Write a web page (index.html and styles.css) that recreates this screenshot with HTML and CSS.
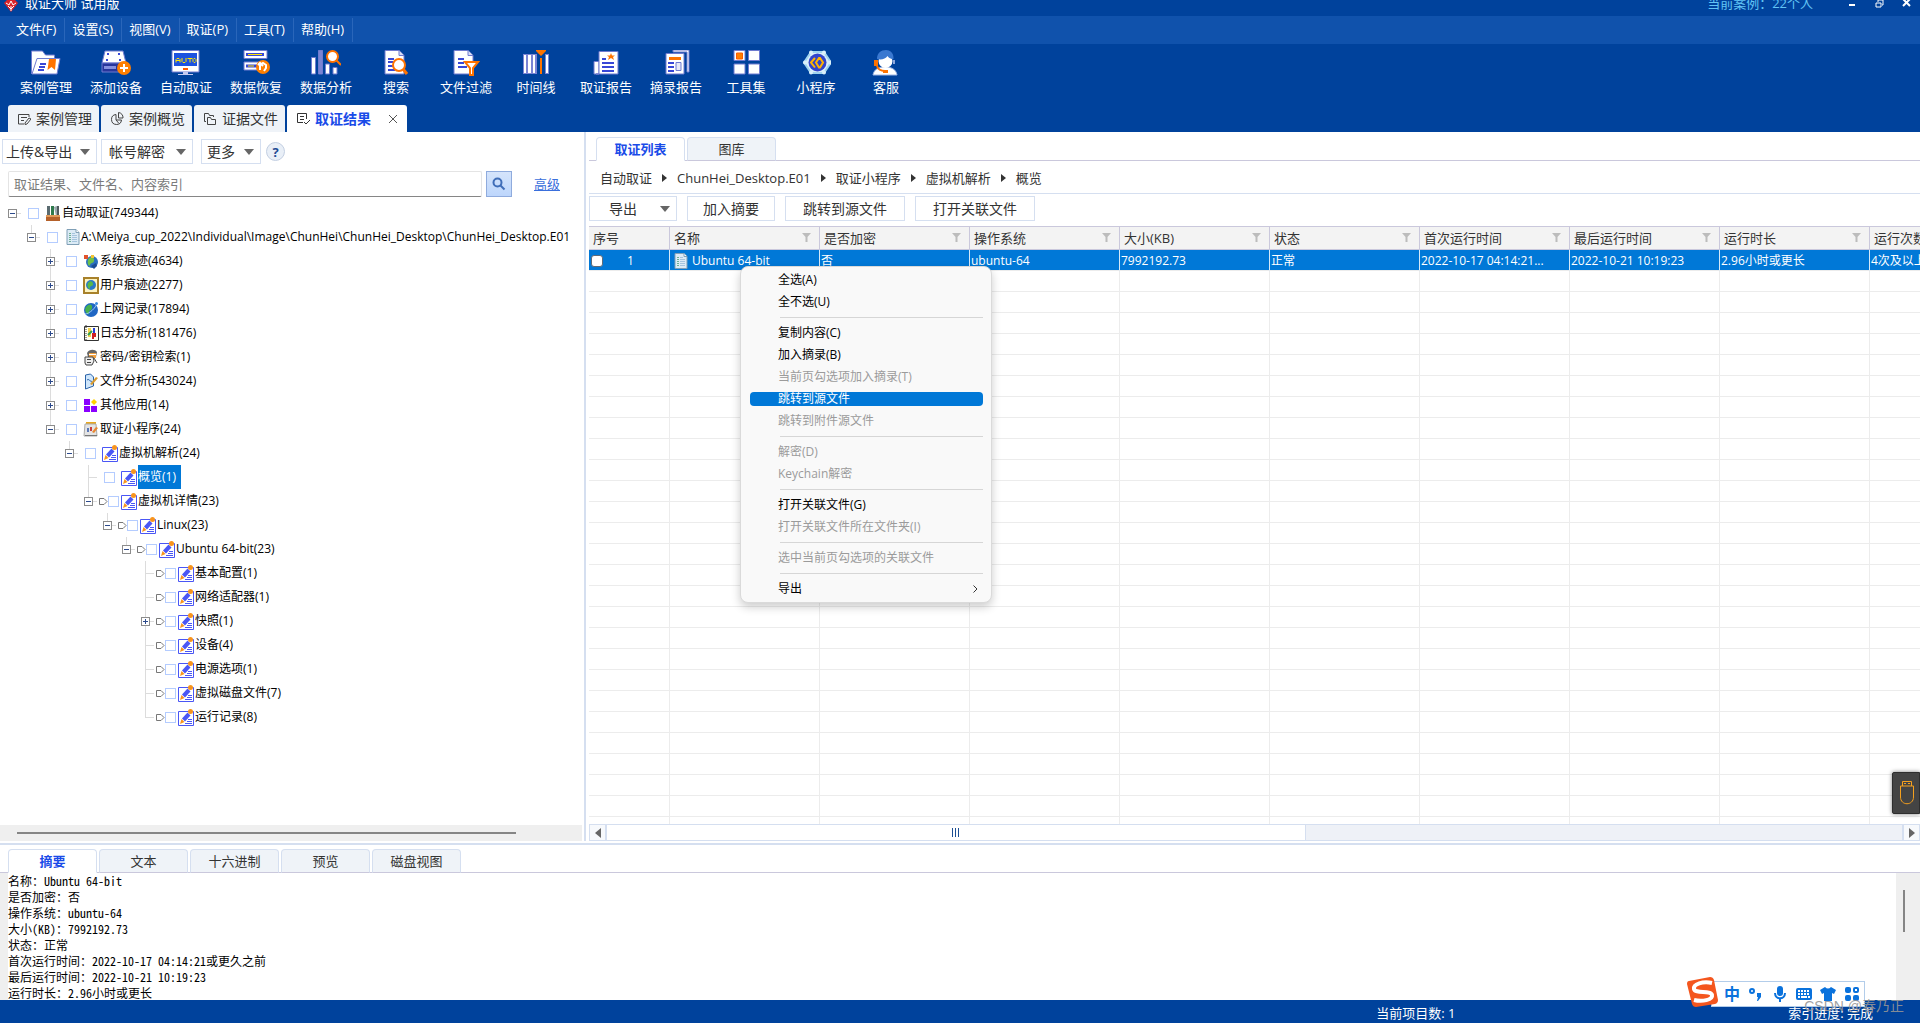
FILE: index.html
```html
<!DOCTYPE html>
<html lang="zh-CN">
<head>
    <meta charset="UTF-8">
    <meta name="viewport" content="width=device-width, initial-scale=1">
    <title>取证大师 试用版</title>
    <link rel="stylesheet" href="styles.css">
</head>
<body>

    <!-- shared icons -->
    <svg class="sprite" aria-hidden="true">
        <symbol id="i-edit" viewBox="0 0 17 17">
            <path d="M.5 2.500h15v14H.5z" fill="#fff" stroke="#4a56f5"/>
            <path d="M4 9.500 9.500 3.500l3 3-5.500 6z" fill="#4a56f5"/>
            <path d="m3.500 10 3 3L2 15z" fill="#f7941e"/>
            <circle cx="12.500" cy="2.500" r="2.500" fill="#f7941e"/>
            <path d="M10 10.500h4M9 12.500h5M7 14.500h7" stroke="#4a56f5"/>
        </symbol>
        <symbol id="i-doc" viewBox="0 0 14 16">
            <path d="M1 .5h9l3 3v12H1z" fill="#dcebf6" stroke="#7f9fb6"/>
            <path d="M10 .5v3h3" fill="#fff" stroke="#7f9fb6"/>
            <path d="M3 4.500h2M3 6.500h2M3 8.500h2M3 10.500h2M3 12.500h2" stroke="#6fb094"/>
            <path d="M6 4.500h3M6 6.500h5M6 8.500h5M6 10.500h5M6 12.500h5" stroke="#a5c4de"/>
        </symbol>
        <symbol id="i-tag" viewBox="0 0 9 9">
            <path d="M.5 1.500h4.500l3 3-3 3H.5z" fill="#fff" stroke="#777"/>
        </symbol>
        <symbol id="i-filter" viewBox="0 0 9 9">
            <path d="M0 0h9L5.500 4v5h-2V4z" fill="#bcbcbc"/>
        </symbol>
        <symbol id="i-down" viewBox="0 0 10 6">
            <path d="M0 0h10L5 6z" fill="#666"/>
        </symbol>
        <symbol id="i-crumb" viewBox="0 0 5 8">
            <path d="M0 0l5 4-5 4z" fill="#333"/>
        </symbol>
    </svg>

    <header class="top">
        <div class="titlebar">
            <svg class="app-logo" viewBox="0 0 14 12"><path d="M0 3l3-3h8l3 3-7 9z" fill="#d8232a"/><path d="M2 3l3 2 2-4 2 4 3-2M7 6v5M4 6l3 3 3-3" stroke="#fff" fill="none"/></svg>
            <span class="app-name">取证大师 试用版</span>
            <span class="case-name">当前案例：22个人</span>
            <button class="win-btn" aria-label="最小化"><svg viewBox="0 0 9 8"><path d="M1 5h6" stroke="#fff" stroke-width="2"/></svg></button>
            <button class="win-btn" aria-label="还原"><svg viewBox="0 0 9 8"><path d="M1 3h5v4H1zM3 2V0h5v5H7" stroke="#fff" fill="none"/></svg></button>
            <button class="win-btn" aria-label="关闭"><svg viewBox="0 0 9 8"><path d="M1-1l7 7M8-1L1 6" stroke="#fff" stroke-width="2"/></svg></button>
        </div>

        <nav class="menubar">
            <button>文件(F)</button>
            <button>设置(S)</button>
            <button>视图(V)</button>
            <button>取证(P)</button>
            <button>工具(T)</button>
            <button>帮助(H)</button>
        </nav>

        <div class="toolbar">
            <button>
                <svg viewBox="0 0 30 26"><path d="M.5 24V1h11l3 4h9v5" fill="#fff" stroke="#6f7bd0"/><path d="M1 24 6 8.500h23L26 24z" fill="#fff" stroke="#6f7bd0"/><path d="M9 14h6M8 17h6M7 20h6" stroke="#3847d6" stroke-width="2"/><path d="M18 9h7l-1 11-3.500-3-4 3z" fill="#ff7300"/></svg>
                案例管理
            </button>
            <button>
                <svg viewBox="0 0 30 26"><path d="M4 1h18l3 12H1z" fill="#fff" stroke="#6f7bd0"/><path d="M1 13h23v9H1z" fill="#27359b" stroke="#6f7bd0"/><path d="M3 16h12v3H3z" fill="#8590de"/><path d="M6 3h2v2H6zM17 3h2v2h-2zM5 9h2v2H5zM18 9h2v2h-2z" fill="#3847d6"/><circle cx="23" cy="18" r="7" fill="#ff7f00"/><path d="M23 14v8M19 18h8" stroke="#fff" stroke-width="2"/></svg>
                添加设备
            </button>
            <button>
                <svg viewBox="0 0 30 26"><path d="M1 .5h27V22H1z" fill="#fff" stroke="#6f7bd0"/><path d="M3 3h23v13H3z" fill="#1c52e0"/><path d="M5 12.500V9.500l1-1h2l1 1v3M5 10.500h4M11 8v3.500l1 1h2l1-1V8M16.500 8.500h5M19 8.500v4M22 9.500l1-1h1l1 1v2l-1 1h-1l-1-1z" fill="none" stroke="#ffe600"/><path d="M12 18h5v2h-5z" fill="#ff5a00"/><path d="M12 22h5v2h5v1H7v-1h5z" fill="#c5cbf0"/></svg>
                自动取证
            </button>
            <button>
                <svg viewBox="0 0 30 26"><path d="M3 .5h23v8H3zM3 12h23v8H3z" fill="#fff" stroke="#6f7bd0"/><path d="M5 3h18v3H5zM5 14.500h12v3H5z" fill="#3847d6"/><path d="M7 4h14v1H7zM7 15.500h6v1H7z" fill="#ffe600"/><circle cx="22" cy="17" r="7" fill="#ff7f00"/><path d="M19 20v-5l3-2 3 2v3l-2 3M17 15l2-2 3 3" fill="none" stroke="#fff" stroke-width="2"/></svg>
                数据恢复
            </button>
            <button>
                <svg viewBox="0 0 30 26"><path d="M.5 7.500h4V24h-4zM7.500.5h4V24h-4zM14.500 14h4v10h-4zM22 17.500h4V24h-4z" fill="#fff" stroke="#6f7bd0"/><path d="M8 1h3v23H8z" fill="#7a84d4"/><circle cx="21.500" cy="6.500" r="5.500" fill="#fff" stroke="#ff7300" stroke-width="2"/><path d="m25 10 5 5" stroke="#ff7300" stroke-width="2"/></svg>
                数据分析
            </button>
            <button>
                <svg viewBox="0 0 30 26"><path d="M4 .5h14l5 5V24H4z" fill="#fff" stroke="#6f7bd0"/><path d="M18 .5v5h5" fill="#d8dcf6" stroke="#6f7bd0"/><path d="M7 9h6M7 12h5M7 16h5M7 20h7" stroke="#3847d6" stroke-width="2"/><circle cx="18" cy="15" r="6" fill="#fff" stroke="#ff7300" stroke-width="2"/><path d="m22 19 4 5" stroke="#ff7300" stroke-width="3"/></svg>
                搜索
            </button>
            <button>
                <svg viewBox="0 0 30 26"><path d="M3 .5h14l5 5V24H3z" fill="#fff" stroke="#6f7bd0"/><path d="M17 .5v5h5" fill="#d8dcf6" stroke="#6f7bd0"/><path d="M7 9h6M7 13h6M7 17h9" stroke="#3847d6" stroke-width="2"/><path d="M14 12h13l-5 6v7h-3v-7z" fill="#fff" stroke="#ff7300" stroke-width="2"/></svg>
                文件过滤
            </button>
            <button>
                <svg viewBox="0 0 30 26"><path d="M2 4h26v20H2z" fill="#7a84d4"/><path d="M3 5h2v18H3zM7 5h3v18H7zM12 5h2v18h-2zM25 5h2v18h-2z" fill="#fff"/><path d="M16 4h8v20h-8z" fill="#00429c"/><path d="M19 8h2v16h-2zM15 0h10v1l-5 5-5-5z" fill="#ff7300"/></svg>
                时间线
            </button>
            <button>
                <svg viewBox="-2 0 30 26"><path d="M1 24V11.500h5V24z" fill="#fff" stroke="#6f7bd0"/><path d="M6 1.500h19V24H3h3z" fill="#fff" stroke="#6f7bd0"/><path d="m18 3 1 2.500h3L20 7l1 3-3-2-3 2 1-3-2-1.500h3z" fill="#ff7300"/><path d="M9 9h4M9 13h12M9 17h12M9 21h12" stroke="#3847d6" stroke-width="2"/></svg>
                取证报告
            </button>
            <button>
                <svg viewBox="-2 0 30 26"><path d="M10 0h16v22h-2V2H10z" fill="#fff" stroke="#6f7bd0"/><path d="M3 3.500h18V24H3z" fill="#fff" stroke="#6f7bd0"/><path d="M6 7h12v3H6z" fill="#ff7300"/><path d="M5 13h6M5 17h6M5 21h6" stroke="#3847d6" stroke-width="2"/><path d="M13 12.500h5v8h-5z" fill="#e6e8f8" stroke="#6f7bd0"/></svg>
                摘录报告
            </button>
            <button>
                <svg viewBox="-1 0 30 26"><path d="M2 .5h11v10H2zM16.500.5h11v10h-11zM2 14h11v10H2zM16.500 14h11v10h-11z" fill="#fff" stroke="#6f7bd0"/><path d="M4.500 3h6v6h-6z" fill="#ff7f00" stroke="#ff5a00"/></svg>
                工具集
            </button>
            <button>
                <svg viewBox="-2 0 30 26"><path d="M8 2h13l7 10.500L21 23H8L1 12.500z" fill="#d9effa" stroke="#9fd3ee" stroke-width="2"/><circle cx="14.500" cy="12.500" r="9" fill="#3244cc"/><path d="m12 8-4 4.500 4 5M16 8l-3 4.500 3 5h1l3-5L17 8z" fill="none" stroke="#ffb400" stroke-width="2"/><circle cx="8" cy="2.500" r="2" fill="#d9effa"/><circle cx="21" cy="2.500" r="2" fill="#d9effa"/><circle cx="8" cy="22.500" r="2" fill="#d9effa"/><circle cx="21" cy="22.500" r="2" fill="#d9effa"/><circle cx="2" cy="12.500" r="2" fill="#d9effa"/><circle cx="27" cy="12.500" r="2" fill="#d9effa"/></svg>
                小程序
            </button>
            <button>
                <svg viewBox="0 0 30 26"><path d="M2 25c1-6 6-8 12-8s11 2 12 8z" fill="#fff" stroke="#9fb6e4"/><circle cx="14.500" cy="11" r="7" fill="#fff"/><path d="M6 9c0-6 4-9 9-9 4 0 8 3 7.500 9-4 0-5-2-6-3-2 3-6 4-10.500 3z" fill="#3a78d0"/><path d="M3 10h4v6H3z" fill="#ff7300"/><path d="M6 16c1 3 4 5 8 5" fill="none" stroke="#ff7300" stroke-width="2"/><path d="M12 20h5v3h-5z" fill="#ff7300"/><path d="M22 10h2v4h-2z" fill="#8fa8de"/></svg>
                客服
            </button>
        </div>

        <div class="doc-tabs">
            <button><svg viewBox="0 0 14 14"><path d="M12 5V2.500H1.500V12H7M4 5.500h6M4 8.500h3M8 11l4-5 2 1-4 5-2 .5z" fill="none" stroke="#444"/></svg>案例管理</button>
            <button><svg viewBox="0 0 14 14"><path d="M6 2.500A5 5 0 1 0 11.500 8H6zM8.500.5V6H13A5 5 0 0 0 8.500.5zM6 8l3 3.500" fill="none" stroke="#444"/></svg>案例概览</button>
            <button><svg viewBox="0 0 14 14"><path d="M3 9.500H1.500v-8h4l1 2h4V5M4.500 12.500v-7h3l1 2h4v5z" fill="none" stroke="#444"/></svg>证据文件</button>
            <button class="active"><svg viewBox="0 0 14 14"><path d="M10.500 7V1.500h-9v9H7M4 4.500h4M4 7.500h4M8 10l2 2 4-4" fill="none" stroke="#333"/></svg>取证结果<svg class="close" viewBox="0 0 8 8"><path d="M0 0l8 8M8 0L0 8" stroke="#555"/></svg></button>
        </div>
    </header>

    <main class="workspace">
        <section class="left-panel">
            <div class="left-tools">
                <button class="tool-btn">上传&amp;导出<svg class="down"><use href="#i-down"/></svg></button>
                <button class="tool-btn account">帐号解密<svg class="down"><use href="#i-down"/></svg></button>
                <button class="tool-btn more">更多<svg class="down"><use href="#i-down"/></svg></button>
                <button class="help" aria-label="帮助">?</button>
            </div>
            <form class="search">
                <input type="text" aria-label="搜索" placeholder="取证结果、文件名、内容索引">
                <button type="button" aria-label="搜索"><svg viewBox="0 0 14 14"><circle cx="5.500" cy="5.500" r="4" fill="none" stroke="#3f6db8" stroke-width="2"/><path d="m8.500 8.500 4 4" stroke="#3f6db8" stroke-width="2"/></svg></button>
                <a href="#">高级</a>
            </form>

            <ul class="tree">
                <li>
                    <div class="node"><button class="toggle minus" aria-label="折叠"></button><label><input type="checkbox"><svg viewBox="0 0 17 17"><path d="M2 1h3v10H2z" fill="#5a6b70"/><path d="M6 1h3v10H6z" fill="#2f7a4c"/><path d="m9 2 3-1 2 10h-3z" fill="#9aa8ad"/><path d="M12 1h2v10h-2z" fill="#4f5a5e"/><path d="M1 10h14v6H1z" fill="#b5612a"/><path d="M1 10h14v2H1z" fill="#e09a5a"/></svg>自动取证(749344)</label></div>
                    <ul>
                        <li>
                            <div class="node"><button class="toggle minus" aria-label="折叠"></button><label><input type="checkbox"><svg class="page"><use href="#i-doc"/></svg>A:\Meiya_cup_2022\Individual\Image\ChunHei\ChunHei_Desktop\ChunHei_Desktop.E01</label></div>
                            <ul>
                                <li><div class="node"><button class="toggle" aria-label="展开"></button><label><input type="checkbox"><svg viewBox="0 0 17 17"><circle cx="9" cy="9" r="6" fill="#2a6fc0"/><path d="M6 5c3-2 6 0 5 3s-3 1-4 4-4-3-1-7z" fill="#6cc04a"/><path d="M1 2h4v4H1z" fill="#e2522b"/><path d="m8 13 5-3 1 3-3 3z" fill="#1c4c94"/><path d="M8 2h3v3H8z" fill="#f2c230"/></svg>系统痕迹(4634)</label></div></li>
                                <li><div class="node"><button class="toggle" aria-label="展开"></button><label><input type="checkbox"><svg viewBox="0 0 17 17"><path d="M1 1h14v15H1z" fill="#fdf3c0" stroke="#a8812a" stroke-width="2"/><circle cx="8" cy="8" r="5" fill="#2a78c8"/><path d="M5 6c2-3 5-2 5 1s-3 1-3 4-4-2-2-5z" fill="#58b848"/></svg>用户痕迹(2277)</label></div></li>
                                <li><div class="node"><button class="toggle" aria-label="展开"></button><label><input type="checkbox"><svg viewBox="0 0 17 17"><circle cx="8" cy="9" r="7" fill="#1f66c4"/><path d="M3 6c3-4 7-3 6 1s-3 1-3 5-6-2-3-6z" fill="#47b04e"/><path d="M2 13C6 13 13 7 14 2" fill="none" stroke="#9cc9f5"/><circle cx="13.500" cy="2.500" r="1.500" fill="#3a8be0"/></svg>上网记录(17894)</label></div></li>
                                <li><div class="node"><button class="toggle" aria-label="展开"></button><label><input type="checkbox"><svg viewBox="0 0 17 17"><path d="M1.500 1.500h14v14h-14z" fill="#fffef0" stroke="#333"/><path d="M3 0v16" stroke="#333" stroke-dasharray="1 1"/><path d="M5 3h3v9H5z" fill="#f3d44c"/><path d="M10 3h2v5h-2z" fill="#2440d8"/><path d="M9 9h3v2h-2v3" fill="none" stroke="#d02020" stroke-width="2"/><path d="m5 10 4-4" stroke="#30a050" stroke-width="2"/></svg>日志分析(181476)</label></div></li>
                                <li><div class="node"><button class="toggle" aria-label="展开"></button><label><input type="checkbox"><svg viewBox="0 0 17 17"><path d="M4 4c2-4 8-4 10-1l-1 5H5z" fill="#666"/><path d="M6 4h7v5H6z" fill="#f0a040"/><path d="M6 5.500h7" stroke="#fff"/><path d="M2 8h8l1 4-2 4H3l-1-2z" fill="#eee" stroke="#444"/><path d="M4 10.500h4M4 13.500h4M11 9l3 5" stroke="#444"/></svg>密码/密钥检索(1)</label></div></li>
                                <li><div class="node"><button class="toggle" aria-label="展开"></button><label><input type="checkbox"><svg viewBox="0 0 17 17"><path d="M2.500 2l5-1 3 3v9l-8 3z" fill="#cfe6fb" stroke="#2a62a8"/><path d="M4 7c3-2 3 3 5 1" fill="none" stroke="#2a62a8"/><path d="m7 11 6-7 2 1-6 7z" fill="#d89b30"/></svg>文件分析(543024)</label></div></li>
                                <li><div class="node"><button class="toggle" aria-label="展开"></button><label><input type="checkbox"><svg viewBox="0 0 17 17"><path d="M1 2h6v6H1zM1 9h6v6H1zM8 9h6v6H8z" fill="#8a00ff"/><path d="m11 2 3 3-3 3-3-3z" fill="#ffd400"/></svg>其他应用(14)</label></div></li>
                                <li>
                                    <div class="node"><button class="toggle minus" aria-label="折叠"></button><label><input type="checkbox"><svg viewBox="0 0 17 17"><path d="M3 1h10v3H3z" fill="#e8a820"/><path d="M2 3h11l1 12H1z" fill="#e4e4e4" stroke="#aaa"/><path d="M4 7h2v4H4z" fill="#5a78b8"/><path d="M7 6h2v4H7z" fill="#c84040"/><path d="m9 11 4-5 2 1-4 5z" fill="#e88830"/><path d="M2 14.500h12" stroke="#777"/></svg>取证小程序(24)</label></div>
                                    <ul>
                                        <li>
                                            <div class="node"><button class="toggle minus" aria-label="折叠"></button><label><input type="checkbox"><svg><use href="#i-edit"/></svg>虚拟机解析(24)</label></div>
                                            <ul>
                                                <li><div class="node"><span class="leaf"></span><label><input type="checkbox"><svg><use href="#i-edit"/></svg><span class="selected">概览(1)</span></label></div></li>
                                                <li>
                                                    <div class="node tagged"><button class="toggle minus" aria-label="折叠"></button><svg class="tag"><use href="#i-tag"/></svg><label><input type="checkbox"><svg><use href="#i-edit"/></svg>虚拟机详情(23)</label></div>
                                                    <ul>
                                                        <li>
                                                            <div class="node tagged"><button class="toggle minus" aria-label="折叠"></button><svg class="tag"><use href="#i-tag"/></svg><label><input type="checkbox"><svg><use href="#i-edit"/></svg>Linux(23)</label></div>
                                                            <ul>
                                                                <li>
                                                                    <div class="node tagged"><button class="toggle minus" aria-label="折叠"></button><svg class="tag"><use href="#i-tag"/></svg><label><input type="checkbox"><svg><use href="#i-edit"/></svg>Ubuntu 64-bit(23)</label></div>
                                                                    <ul>
                                                                        <li><div class="node tagged"><span class="leaf"></span><svg class="tag"><use href="#i-tag"/></svg><label><input type="checkbox"><svg><use href="#i-edit"/></svg>基本配置(1)</label></div></li>
                                                                        <li><div class="node tagged"><span class="leaf"></span><svg class="tag"><use href="#i-tag"/></svg><label><input type="checkbox"><svg><use href="#i-edit"/></svg>网络适配器(1)</label></div></li>
                                                                        <li><div class="node tagged"><button class="toggle" aria-label="展开"></button><svg class="tag"><use href="#i-tag"/></svg><label><input type="checkbox"><svg><use href="#i-edit"/></svg>快照(1)</label></div></li>
                                                                        <li><div class="node tagged"><span class="leaf"></span><svg class="tag"><use href="#i-tag"/></svg><label><input type="checkbox"><svg><use href="#i-edit"/></svg>设备(4)</label></div></li>
                                                                        <li><div class="node tagged"><span class="leaf"></span><svg class="tag"><use href="#i-tag"/></svg><label><input type="checkbox"><svg><use href="#i-edit"/></svg>电源选项(1)</label></div></li>
                                                                        <li><div class="node tagged"><span class="leaf"></span><svg class="tag"><use href="#i-tag"/></svg><label><input type="checkbox"><svg><use href="#i-edit"/></svg>虚拟磁盘文件(7)</label></div></li>
                                                                        <li><div class="node tagged"><span class="leaf"></span><svg class="tag"><use href="#i-tag"/></svg><label><input type="checkbox"><svg><use href="#i-edit"/></svg>运行记录(8)</label></div></li>
                                                                    </ul>
                                                                </li>
                                                            </ul>
                                                        </li>
                                                    </ul>
                                                </li>
                                            </ul>
                                        </li>
                                    </ul>
                                </li>
                            </ul>
                        </li>
                    </ul>
                </li>
            </ul>
            <div class="thin-scroll"><div class="thin-thumb"></div></div>
        </section>

        <section class="right-panel">
            <div class="tabs">
                <button class="active">取证列表</button>
                <button>图库</button>
            </div>
            <nav class="crumbs">
                <a href="#">自动取证</a><svg><use href="#i-crumb"/></svg>
                <a href="#">ChunHei_Desktop.E01</a><svg><use href="#i-crumb"/></svg>
                <a href="#">取证小程序</a><svg><use href="#i-crumb"/></svg>
                <a href="#">虚拟机解析</a><svg><use href="#i-crumb"/></svg>
                <a href="#">概览</a>
            </nav>
            <div class="actions">
                <button class="tool-btn export">导出<svg class="down"><use href="#i-down"/></svg></button>
                <button class="tool-btn">加入摘要</button>
                <button class="tool-btn wide">跳转到源文件</button>
                <button class="tool-btn wide">打开关联文件</button>
            </div>

            <div class="grid">
                <table>
                    <thead>
                        <tr>
                            <th class="num">序号</th>
                            <th>名称<svg><use href="#i-filter"/></svg></th>
                            <th>是否加密<svg><use href="#i-filter"/></svg></th>
                            <th>操作系统<svg><use href="#i-filter"/></svg></th>
                            <th>大小(KB)<svg><use href="#i-filter"/></svg></th>
                            <th>状态<svg><use href="#i-filter"/></svg></th>
                            <th>首次运行时间<svg><use href="#i-filter"/></svg></th>
                            <th>最后运行时间<svg><use href="#i-filter"/></svg></th>
                            <th>运行时长<svg><use href="#i-filter"/></svg></th>
                            <th>运行次数<svg><use href="#i-filter"/></svg></th>
                        </tr>
                    </thead>
                    <tbody>
                        <tr>
                            <td class="num"><label><input type="checkbox"><span>1</span></label></td>
                            <td class="name"><svg><use href="#i-doc"/></svg>Ubuntu 64-bit</td>
                            <td>否</td>
                            <td>ubuntu-64</td>
                            <td>7992192.73</td>
                            <td>正常</td>
                            <td>2022-10-17 04:14:21...</td>
                            <td>2022-10-21 10:19:23</td>
                            <td>2.96小时或更长</td>
                            <td>4次及以上</td>
                        </tr>
                    </tbody>
                </table>
            </div>
            <div class="hscroll">
                <button aria-label="向左"><svg viewBox="0 0 6 10"><path d="M6 0v10L0 5z" fill="#666"/></svg></button>
                <div class="track"><div class="thumb"><i></i><i></i><i></i></div></div>
                <button aria-label="向右"><svg viewBox="0 0 6 10"><path d="M0 0v10l6-5z" fill="#666"/></svg></button>
            </div>

            <div class="context-menu">
                <button>全选(A)</button>
                <button>全不选(U)</button>
                <hr>
                <button>复制内容(C)</button>
                <button>加入摘录(B)</button>
                <button disabled>当前页勾选项加入摘录(T)</button>
                <button class="hover"><span>跳转到源文件</span></button>
                <button disabled>跳转到附件源文件</button>
                <hr>
                <button disabled>解密(D)</button>
                <button disabled>Keychain解密</button>
                <hr>
                <button>打开关联文件(G)</button>
                <button disabled>打开关联文件所在文件夹(I)</button>
                <hr>
                <button disabled>选中当前页勾选项的关联文件</button>
                <hr>
                <button class="sub">导出<svg viewBox="0 0 5 8"><path d="m.5.5 3.500 3.500-3.500 3.500" fill="none" stroke="#333"/></svg></button>
            </div>

            <button class="usb" aria-label="USB"><svg viewBox="0 0 16 24"><path d="M3.500 5V.5h9V5M1.500 5h13v11c0 9-13 9-13 0z" fill="none" stroke="#f5a01e"/><path d="M5 2.500h2M9 2.500h2" stroke="#f5a01e"/></svg></button>
        </section>
    </main>

    <section class="bottom-panel">
        <div class="tabs">
            <button class="active">摘要</button>
            <button>文本</button>
            <button>十六进制</button>
            <button>预览</button>
            <button>磁盘视图</button>
        </div>
        <div class="summary">
            <div class="summary-text">
                <p>名称：Ubuntu 64-bit</p>
                <p>是否加密：否</p>
                <p>操作系统：ubuntu-64</p>
                <p>大小(KB)：7992192.73</p>
                <p>状态：正常</p>
                <p>首次运行时间：2022-10-17 04:14:21或更久之前</p>
                <p>最后运行时间：2022-10-21 10:19:23</p>
                <p>运行时长：2.96小时或更长</p>
            </div>
            <div class="v-scroll"><div class="v-thumb"></div></div>
        </div>
    </section>

    <footer class="statusbar">
        <span class="count">当前项目数: 1</span>
        <span>索引进度: 完成</span>
    </footer>

    <!-- floating input method bar -->
    <div class="ime">
        <svg class="sogou" viewBox="0 0 34 32"><path d="M3 5 24 1q3 0 4 3l4 20q0 3-3 4L10 31q-3 0-4-3L1 8q0-3 2-3z" fill="#f4561e"/><path d="M26 7C17 5 7 8 8 13s17 1 18 6-10 7-18 5" fill="none" stroke="#fff" stroke-width="4"/></svg>
        <span class="zh">中</span>
        <svg viewBox="0 0 16 16"><circle cx="4" cy="5" r="2" fill="none" stroke="#0a72dc" stroke-width="2"/><path d="M9 7h4v4l-3 4H9l1-4H9z" fill="#0a72dc"/></svg>
        <svg viewBox="0 0 16 16"><path d="M8 0a3 3 0 0 1 3 3v4a3 3 0 0 1-6 0V3a3 3 0 0 1 3-3z" fill="#0a72dc"/><path d="M3 7c0 7 10 7 10 0M8 12v4" fill="none" stroke="#0a72dc" stroke-width="2"/></svg>
        <svg viewBox="0 0 16 16"><rect y="2" width="16" height="12" rx="2" fill="#0a72dc"/><path d="M2 5h2m1 0h2m1 0h2m1 0h2M2 8h2m1 0h2m1 0h2m1 0h2M2 11h2m1 0h6m1 0h2" stroke="#fff" stroke-width="2"/></svg>
        <svg viewBox="0 0 16 16"><path d="M5 1q3 3 6 0l5 3-2 4-2-1v8H4V7L2 8 0 4z" fill="#0a72dc"/></svg>
        <svg viewBox="0 0 16 16"><rect x="1" y="1" width="6" height="6" rx="2" fill="#0a72dc"/><rect x="10" y="2" width="4" height="4" rx="1" fill="none" stroke="#0a72dc" stroke-width="2"/><rect x="1" y="9" width="6" height="6" rx="2" fill="#0a72dc"/><rect x="9" y="9" width="6" height="6" rx="2" fill="#0a72dc"/></svg>
    </div>
    <div class="watermark">CSDN @春乃正</div>

</body>
</html>
```
FILE: styles.css
```css
* {
    box-sizing: border-box;
}
body {
    margin: 0;
    height: 100vh;
    display: flex;
    flex-direction: column;
    overflow: hidden;
    position: relative;
    background-color: #fff;
    color: #333;
    font-family: "Open Sans", "Noto Sans CJK SC", sans-serif;
    font-size: 13px;
    line-height: 16px;
}
button, input {
    font: inherit;
    color: inherit;
}
button {
    border: none;
    background: none;
    padding: 0;
    white-space: nowrap;
}
svg {
    flex-shrink: 0;
}
ul {
    list-style-type: none;
    margin: 0;
    padding: 0;
}
.sprite {
    display: none;
}

/* header */
.top {
    background-color: #00429c;
    color: #fff;
}
.titlebar {
    height: 16px;
    padding: 0 9px 0 4px;
    display: flex;
    align-items: flex-start;
    line-height: 7px;
    overflow: hidden;
}
.app-logo {
    width: 14px;
    height: 12px;
    margin-right: 7px;
}
.case-name {
    margin-left: auto;
    margin-right: 35px;
    color: #62c4f5;
}
.win-btn {
    width: 9px;
    height: 8px;
    margin-right: 18px;
    display: flex;
}
.win-btn:last-child {
    margin-right: 0;
}
.menubar {
    height: 28px;
    padding: 2px 9px;
    display: flex;
    background-color: #1052ac;
}
.menubar button {
    padding: 0 8px 2px 7px;
    border-right: 1px solid #2a66ba;
}
.toolbar {
    height: 61px;
    padding: 6px 11px 0;
    display: flex;
}
.toolbar button {
    width: 70px;
    display: flex;
    flex-direction: column;
    align-items: center;
    gap: 3px;
}
.toolbar svg {
    width: 30px;
    height: 26px;
}
.doc-tabs {
    padding-left: 8px;
    display: flex;
    gap: 2px;
}
.doc-tabs button {
    height: 27px;
    padding: 0 7px 0 9px;
    display: flex;
    align-items: center;
    border-radius: 3px 3px 0 0;
    background-color: #eff3f8;
    color: #333;
    font-size: 14px;
}
.doc-tabs svg {
    width: 14px;
    height: 14px;
    margin-right: 5px;
}
.doc-tabs .active {
    background-color: #fff;
    color: #1a4be8;
    font-weight: bold;
}
.doc-tabs .close {
    width: 8px;
    height: 8px;
    margin: 0 3px 0 18px;
}

/* work area */
.workspace {
    flex: 1;
    min-height: 0;
    display: flex;
    padding-bottom: 2px;
}
.left-panel {
    width: 586px;
    flex-shrink: 0;
    display: flex;
    flex-direction: column;
    border-right: 2px solid #d5dff0;
    overflow: hidden;
}
.left-tools {
    padding: 7px 2px 0;
    display: flex;
    align-items: center;
    gap: 4px;
}
.tool-btn {
    width: 88px;
    height: 25px;
    display: flex;
    align-items: center;
    justify-content: center;
    border: 1px solid #d5dff0;
    background-color: #fff;
    font-size: 14px;
}
.down {
    width: 10px;
    height: 6px;
}
.left-tools .tool-btn {
    width: 95px;
    padding: 0 6px 0 3px;
    justify-content: space-between;
}
.left-tools .account {
    width: 92px;
    padding-left: 7px;
}
.left-tools .more {
    width: 60px;
    margin-left: 4px;
    padding-left: 5px;
}
.help {
    width: 19px;
    height: 19px;
    margin-left: 1px;
    border: 1px solid #c3cfe2;
    border-radius: 50%;
    background-color: #e9eff7;
    color: #1d4a94;
    font-weight: bold;
}
.search {
    padding: 7px 4px 4px 8px;
    display: flex;
    align-items: center;
    gap: 4px;
}
.search input {
    width: 474px;
    height: 26px;
    padding: 0 5px;
    border: 1px solid #e4e4e4;
    border-bottom-color: #868686;
    border-radius: 2px;
    outline: none;
}
.search input::placeholder {
    color: #7a7a7a;
    opacity: 1;
}
.search button {
    width: 26px;
    height: 26px;
    display: flex;
    align-items: center;
    justify-content: center;
    border: 1px solid #8fabdd;
    background: linear-gradient(#d5e4fb, #bdd6fc);
}
.search button svg {
    width: 14px;
    height: 14px;
}
.search a {
    margin-left: 18px;
    color: #3a6fdc;
}

/* tree */
.tree {
    flex: 1;
    padding-left: 8px;
    overflow: hidden;
    color: #000;
    font-size: 12px;
    white-space: nowrap;
}
.tree ul {
    padding-left: 19px;
}
.tree ul > li {
    background: linear-gradient(#dcdcdc, #dcdcdc) 4px 0 / 1px 100% no-repeat;
}
.tree ul > li:last-child {
    background-size: 1px 12px;
}
.node {
    height: 24px;
    display: flex;
    align-items: center;
    background: linear-gradient(#dcdcdc, #dcdcdc) 4px 12px / 9px 1px no-repeat;
}
.toggle, .leaf {
    width: 9px;
    height: 9px;
    margin-right: 11px;
    flex-shrink: 0;
}
.toggle {
    border: 1px solid #8c8c8c;
    background: linear-gradient(#2c4a8c, #2c4a8c) center / 5px 1px no-repeat, linear-gradient(#2c4a8c, #2c4a8c) center / 1px 5px no-repeat, #fff;
}
.minus {
    background: linear-gradient(#2c4a8c, #2c4a8c) center / 5px 1px no-repeat, #fff;
}
.tagged .toggle, .tagged .leaf {
    margin-right: 6px;
}
.tag {
    width: 9px;
    height: 9px;
}
.node label {
    height: 24px;
    display: flex;
    align-items: center;
}
.node input {
    appearance: none;
    width: 11px;
    height: 11px;
    margin: 0 6px 0 0;
    flex-shrink: 0;
    border: 1px solid #b4ccff;
    background-color: #fff;
}
.tagged input {
    margin-right: 2px;
}
.node label svg {
    width: 17px;
    height: 17px;
}
.node label .page {
    width: 14px;
    height: 16px;
    margin: 0 1px 0 2px;
}
.selected {
    padding-right: 5px;
    background-color: #0078d7;
    color: #fff;
    line-height: 24px;
}
.thin-scroll {
    height: 16px;
    margin-right: 2px;
    padding: 7px 66px 0 17px;
    background-color: #efefef;
}
.thin-thumb {
    height: 2px;
    background-color: #858585;
}

/* right side */
.right-panel {
    flex: 1;
    min-width: 0;
    display: flex;
    flex-direction: column;
    padding-left: 3px;
    position: relative;
}
.tabs {
    display: flex;
    gap: 2px;
    padding: 4px 7px 0;
    background: linear-gradient(#cac8dc, #cac8dc) bottom / 100% 1px no-repeat;
}
.tabs button {
    width: 89px;
    height: 24px;
    padding-bottom: 1px;
    border: 1px solid #d5dff0;
    border-bottom-color: #cac8dc;
    border-radius: 4px 4px 0 0;
    background-color: #eff3f8;
}
.tabs .active {
    border-bottom-color: #fff;
    background-color: #fff;
    color: #1a4be8;
    font-weight: bold;
}
.crumbs {
    height: 33px;
    padding: 2px 11px 0;
    display: flex;
    align-items: center;
    gap: 10px;
    border-bottom: 1px solid #d5dff0;
}
.crumbs a {
    color: #333;
    text-decoration: none;
}
.crumbs svg {
    width: 5px;
    height: 8px;
}
.actions {
    padding: 2px 0 5px;
    display: flex;
    gap: 10px;
}
.actions .export {
    padding: 0 6px 0 19px;
    justify-content: space-between;
}
.actions .wide {
    width: 120px;
}
.right-panel > .tabs {
    padding-top: 5px;
}
/* ruled lines of the empty rows below the data */
.grid {
    flex: 1;
    min-height: 0;
    overflow: hidden;
    background:
        repeating-linear-gradient(to right, #ececec 0 1px, transparent 1px 150px) 80px 0 no-repeat,
        repeating-linear-gradient(to bottom, #ececec 0 1px, transparent 1px 21px) 0 23px no-repeat;
}
.grid table {
    width: 1431px;
    table-layout: fixed;
    border-collapse: separate;
    border-spacing: 0;
}
.grid th {
    width: 150px;
    height: 24px;
    padding: 0 8px 0 4px;
    border-top: 1px solid #cac8dc;
    border-bottom: 1px solid #cac8dc;
    border-right: 1px solid #cac8dc;
    background-color: #f3f3f3;
    font-weight: normal;
    text-align: left;
}
.grid th.num {
    width: 81px;
}
.grid th svg {
    width: 9px;
    height: 9px;
    margin-top: 3px;
    float: right;
}
.grid td {
    height: 21px;
    padding: 1px 0 0 1px;
    border-right: 1px solid #d5e8f8;
    border-bottom: 1px solid #ececec;
    background-color: #0078d7;
    color: #fff;
    font-size: 12px;
    white-space: nowrap;
}
.grid td.num {
    padding-left: 2px;
}
.grid td label {
    display: flex;
    align-items: center;
    gap: 24px;
}
.grid td input {
    appearance: none;
    width: 12px;
    height: 12px;
    margin: 0;
    border: 1px solid #5f6b78;
    border-radius: 3px;
    background-color: #fff;
}
.grid td svg {
    width: 14px;
    height: 16px;
    margin: 0 4px 0 3px;
    vertical-align: top;
}
.hscroll {
    height: 17px;
    display: flex;
}
.hscroll button {
    width: 17px;
    display: flex;
    align-items: center;
    justify-content: center;
    border: 1px solid #d5dff0;
    background-color: #f7f9fc;
}
.hscroll svg {
    width: 6px;
    height: 10px;
}
.track {
    flex: 1;
    border: 1px solid #d5dff0;
    background-color: #eef1f7;
    border-left: none;
}
.thumb {
    width: 54%;
    height: 15px;
    display: flex;
    align-items: center;
    justify-content: center;
    gap: 2px;
    border-left: 1px solid #d5dff0;
    border-right: 1px solid #d5dff0;
    background-color: #fff;
}
.thumb i {
    width: 1px;
    height: 9px;
    background-color: #1d4f94;
}

/* popup menu over the grid */
.context-menu {
    position: absolute;
    left: 154px;
    top: 134px;
    width: 252px;
    padding: 2px 8px 2px 37px;
    border: 1px solid #dadada;
    border-radius: 8px;
    background-color: #f9f9f9;
    box-shadow: 0 4px 10px rgba(0, 0, 0, 0.2);
    color: #000;
    font-size: 12px;
}
.context-menu button {
    width: 100%;
    height: 22px;
    display: flex;
    align-items: center;
    text-align: left;
}
.context-menu button:disabled {
    color: #9b9b9b;
}
.context-menu .hover {
    color: #fff;
}
.context-menu .hover span {
    flex: 1;
    margin-left: -28px;
    padding-left: 28px;
    border-radius: 4px;
    background-color: #0078d7;
    line-height: 14px;
}
.context-menu hr {
    height: 1px;
    margin: 4px 0 4px 2px;
    border: none;
    background-color: #d6d6d6;
}
.context-menu .sub {
    padding-right: 5px;
    justify-content: space-between;
}
.context-menu svg {
    width: 5px;
    height: 8px;
}
.usb {
    position: absolute;
    right: 0;
    bottom: 27px;
    width: 28px;
    height: 42px;
    padding: 2px 0 0 2px;
    border: 1px solid #2e2e2e;
    border-radius: 2px 0 0 2px;
    background-color: #444;
    box-shadow: 0 0 4px rgba(0, 0, 0, 0.5);
}
.usb svg {
    width: 16px;
    height: 24px;
}

/* bottom panel */
.bottom-panel {
    height: 157px;
    display: flex;
    flex-direction: column;
    border-top: 2px solid #d5dff0;
}
.bottom-panel .tabs {
    padding-left: 8px;
}
.summary {
    flex: 1;
    min-height: 0;
    padding-left: 8px;
    display: flex;
    background: linear-gradient(#efefef, #efefef) 0 0 / 8px 100% no-repeat;
}
.summary-text {
    flex: 1;
    overflow: hidden;
    color: #000;
    font-family: "Noto Sans Mono CJK SC", "Liberation Serif", "Noto Sans CJK SC", monospace;
    font-size: 12px;
}
.summary-text p {
    margin: 0;
}
.v-scroll {
    width: 24px;
    padding: 17px 0 0 7px;
    background-color: #efefef;
}
.v-thumb {
    width: 2px;
    height: 42px;
    background-color: #858585;
}
.statusbar {
    height: 23px;
    padding: 5px 47px 0 0;
    display: flex;
    justify-content: flex-end;
    background-color: #00429c;
    color: #fff;
}
.statusbar .count {
    width: 412px;
}

/* floats over the lower right corner */
.ime {
    position: absolute;
    right: 55px;
    bottom: 16px;
    height: 26px;
    padding: 0 4px 0 12px;
    display: flex;
    align-items: center;
    gap: 8px;
    border: 1px solid #b3cdea;
    background-color: #fff;
}
.ime svg {
    width: 16px;
    height: 16px;
}
.ime .sogou {
    position: absolute;
    left: -26px;
    top: -6px;
    width: 34px;
    height: 32px;
}
.zh {
    color: #0a72dc;
    font-size: 16px;
    font-weight: bold;
}
.watermark {
    position: absolute;
    right: 16px;
    bottom: 7px;
    color: rgba(150, 150, 150, 0.9);
    font-family: "Liberation Sans", "Noto Sans CJK SC", sans-serif;
    font-size: 14px;
    line-height: 20px;
}
```
